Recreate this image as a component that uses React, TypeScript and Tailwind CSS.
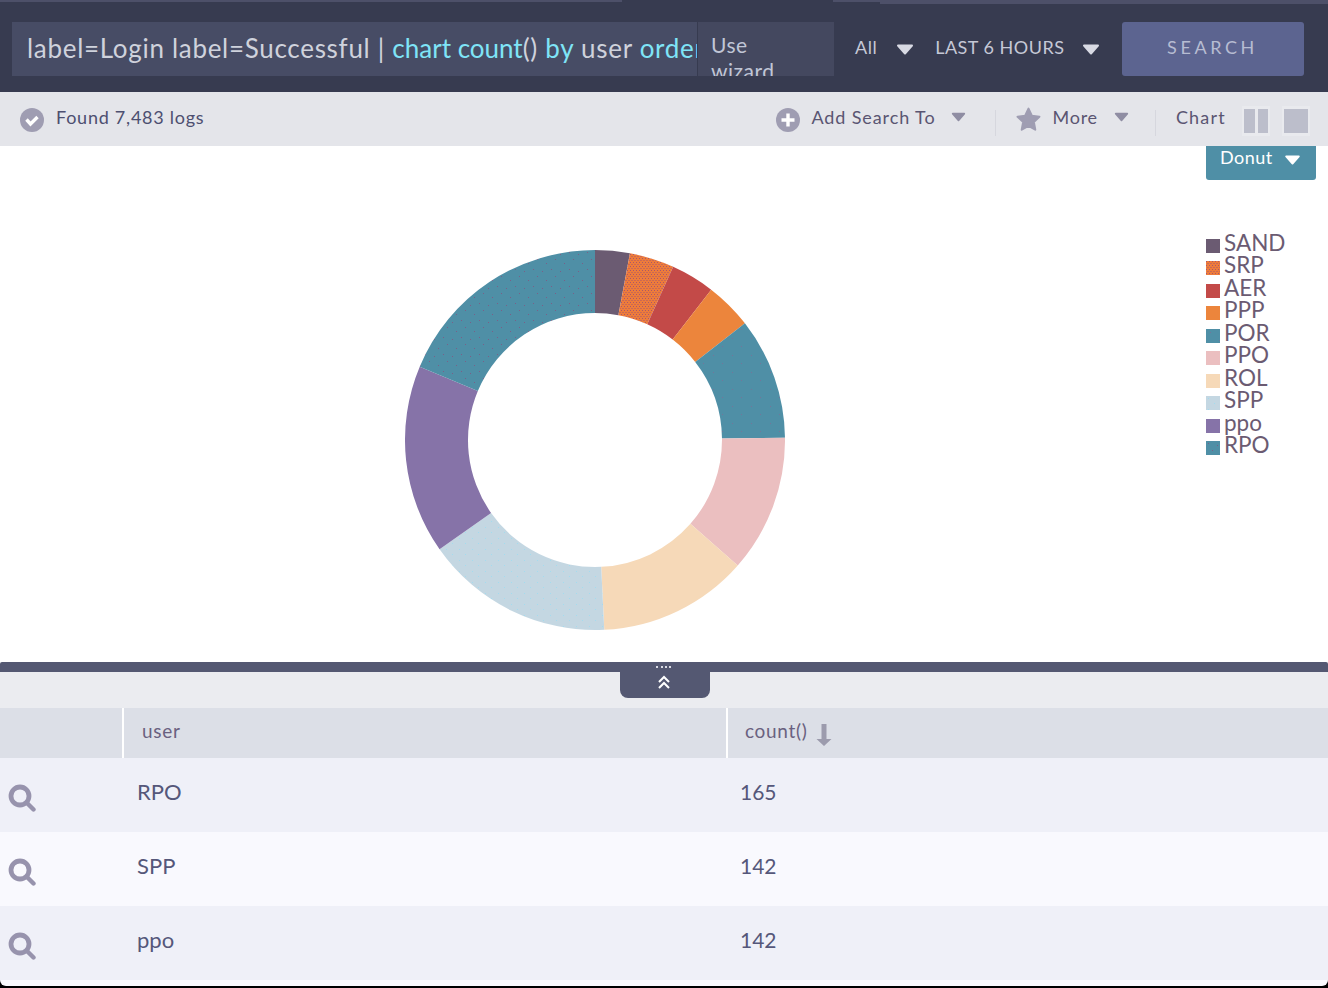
import React from "react";

const CX = 190, CY = 190, RO = 190, RI = 127;
function arc(a0: number, a1: number) {
  const p = (r: number, a: number) => {
    const t = (a * Math.PI) / 180;
    return `${(CX + r * Math.sin(t)).toFixed(2)} ${(CY - r * Math.cos(t)).toFixed(2)}`;
  };
  const large = a1 - a0 > 180 ? 1 : 0;
  return `M${p(RO, a0)} A${RO} ${RO} 0 ${large} 1 ${p(RO, a1)} L${p(RI, a1)} A${RI} ${RI} 0 ${large} 0 ${p(RI, a0)} Z`;
}

const slices = [
  { name: "SAND", color: "#6b5b72", a: 0, b: 10.6 },
  { name: "SRP", color: "url(#dotSrp)", a: 10.6, b: 24.3 },
  { name: "AER", color: "#c34a48", a: 24.3, b: 37.7 },
  { name: "PPP", color: "#ec853c", a: 37.7, b: 52.1 },
  { name: "POR", color: "url(#dotPor)", a: 52.1, b: 89.3 },
  { name: "PPO", color: "#ebbfc0", a: 89.3, b: 131.3 },
  { name: "ROL", color: "#f6d9b8", a: 131.3, b: 177.2 },
  { name: "SPP", color: "url(#dotSpp)", a: 177.2, b: 234.9 },
  { name: "ppo", color: "#8673a8", a: 234.9, b: 292.7 },
  { name: "RPO", color: "url(#dotRpo)", a: 292.7, b: 360 },
];

function Caret({ color, className }: { color: string; className: string }) {
  return (
    <svg viewBox="0 0 18 11" className={className}>
      <path d="M2 1.5h14L9 9.5z" fill={color} stroke={color} strokeWidth="2" strokeLinejoin="round" />
    </svg>
  );
}

function SearchIcon() {
  return (
    <svg viewBox="0 0 28 28" className="w-7 h-7 shrink-0">
      <circle cx="12" cy="12" r="9" fill="none" stroke="#9793ad" strokeWidth="4.8" />
      <path d="M19 19l6.5 6.5" stroke="#9793ad" strokeWidth="4.4" strokeLinecap="round" />
    </svg>
  );
}

function Row({ user, count, bg }: { user: string; count: string; bg: string }) {
  return (
    <div className={`grid grid-cols-[137px_603px_1fr] h-[74px] ${bg}`}>
      <div className="pl-2 pt-[26px]"><SearchIcon /></div>
      <div className="pt-[19px] text-[22px] leading-[30px] text-[#55577a]">{user}</div>
      <div className="pt-[19px] text-[21px] leading-[30px] text-[#55577a]">{count}</div>
    </div>
  );
}

export default function App() {
  return (
    <div className="w-[1328px] h-[988px] overflow-hidden flex flex-col bg-white font-['Lato','Noto_Sans',sans-serif]">
      {/* Top bar */}
      <div className="relative h-[92px] shrink-0 bg-[#373b50] flex items-start pt-[22px] pl-3">
        <div className="absolute top-0 left-0 h-[2px] w-[622px] bg-[#4d5069]" />
        <div className="absolute top-0 left-[833px] h-[2px] w-[47px] bg-[#4d5069]" />
        <div className="absolute top-0 left-[880px] right-0 h-1 bg-[#4d5069]" />
        <div className="w-[685px] h-[54px] bg-[#474c65] overflow-hidden whitespace-nowrap pl-[15px] text-[26px] tracking-[0.7px] leading-[52px] text-[#cfd2dc]">
          label=Login label=Successful | <span className="text-[#7fe4f7] tracking-normal">chart count</span>() <span className="text-[#7fe4f7]">by</span> user <span className="text-[#7fe4f7]">order by count() desc</span>
        </div>
        <div className="ml-px w-[136px] h-[54px] bg-[#44485f] overflow-hidden pl-[13px] pt-[10px] text-[21px] tracking-[0.5px] leading-[26px] text-[#c0c6d6]">
          <div className="w-[70px]">Use wizard</div>
        </div>
        <div className="ml-[21px] h-[54px] pb-[4px] flex items-center text-[#c5c8d6] text-[18px] tracking-[0.5px]">
          <span>All</span>
          <Caret color="#d8dae4" className="w-[18px] h-[11px] ml-[19px] mt-[5px]" />
          <span className="ml-[21px]">LAST 6 HOURS</span>
          <Caret color="#d8dae4" className="w-[18px] h-[11px] ml-[17px] mt-[5px]" />
        </div>
        <div className="ml-[22px] w-[182px] h-[54px] pb-[3px] rounded-[3px] bg-[#5c6490] flex items-center justify-center text-[18px] tracking-[3.6px] text-[#b7bcd2]">
          SEARCH
        </div>
      </div>

      {/* Toolbar */}
      <div className="h-[54px] pb-[3px] shrink-0 bg-[#e4e5ea] flex items-center text-[18px] tracking-[0.75px] text-[#5a5572]">
        <svg viewBox="0 0 24 24" className="w-6 h-6 ml-5 mt-[5px] shrink-0">
          <circle cx="12" cy="12" r="12" fill="#9f9db2" />
          <path d="M6.5 11.5l4 4.5 7-7" fill="none" stroke="#fff" strokeWidth="3.4" />
        </svg>
        <span className="ml-3 text-[#4d4f70]">Found 7,483 logs</span>
        <svg viewBox="0 0 24 24" className="w-6 h-6 ml-[572px] mt-[5px] shrink-0">
          <circle cx="12" cy="12" r="12" fill="#9f9db2" />
          <path d="M12 5.5v13M5.5 12h13" stroke="#fff" strokeWidth="3.4" />
        </svg>
        <span className="ml-[11px] tracking-[0.9px]">Add Search To</span>
        <Caret color="#8f8da3" className="w-[15px] h-[10px] ml-[15px] -mt-[1px]" />
        <div className="ml-[29px] w-px h-[26px] mt-[11px] bg-[#d6d7de]" />
        <svg viewBox="0 0 26 26" className="w-[27px] h-[27px] ml-[19px] mt-[3px] shrink-0">
          <path d="M13 2.5l3.2 6.9 7.3.9-5.4 5.1 1.4 7.4L13 19.2l-6.5 3.6 1.4-7.4-5.4-5.1 7.3-.9z" fill="#9f9db2" stroke="#9f9db2" strokeWidth="2" strokeLinejoin="round" />
        </svg>
        <span className="ml-[11px]">More</span>
        <Caret color="#8f8da3" className="w-[15px] h-[10px] ml-[16px] -mt-[1px]" />
        <div className="ml-[26px] w-px h-[26px] mt-[11px] bg-[#d6d7de]" />
        <span className="ml-[20px] tracking-[1.2px]">Chart</span>
        <div className="ml-[16px] mt-[7px] w-[28px] h-[30px] bg-[#e9eaee] flex items-center justify-center gap-[3px]">
          <div className="w-[11px] h-[24px] bg-[#bcbecb]" />
          <div className="w-[10px] h-[24px] bg-[#bcbecb]" />
        </div>
        <div className="ml-[12px] mt-[7px] w-[28px] h-[30px] bg-[#e9eaee] flex items-center justify-center">
          <div className="w-[24px] h-[24px] bg-[#bcbecb]" />
        </div>
      </div>

      {/* Chart */}
      <div className="h-[516px] shrink-0 flex items-start bg-white">
        <svg viewBox="0 0 380 380" className="w-[380px] h-[380px] ml-[405px] mt-[104px] shrink-0">
          <defs>
            <pattern id="dotSrp" width="3" height="4" patternUnits="userSpaceOnUse">
              <rect width="3" height="4" fill="#ee7c3a" />
              <rect x="0" y="0" width="1" height="1" fill="#a9566c" />
              <rect x="1.5" y="2" width="1" height="1" fill="#a9566c" />
            </pattern>
            <pattern id="dotPor" width="19" height="17" patternUnits="userSpaceOnUse">
              <rect width="19" height="17" fill="#4f8fa6" />
              <rect x="4" y="3" width="1" height="1" fill="#74759a" />
              <rect x="13" y="11" width="1" height="1" fill="#74759a" />
            </pattern>
            <pattern id="dotSpp" width="13" height="11" patternUnits="userSpaceOnUse">
              <rect width="13" height="11" fill="#c4d7e2" />
              <rect x="2" y="2" width="1" height="1" fill="#a3dcef" />
              <rect x="8" y="7" width="1" height="1" fill="#a3dcef" />
            </pattern>
            <pattern id="dotRpo" width="18" height="17" patternUnits="userSpaceOnUse">
              <rect width="18" height="17" fill="#4f8fa6" />
              <rect x="2" y="2" width="1" height="1" fill="#7b5f88" />
              <rect x="11" y="4" width="1" height="1" fill="#7b5f88" />
              <rect x="6" y="9" width="1" height="1" fill="#7b5f88" />
              <rect x="15" y="13" width="1" height="1" fill="#7b5f88" />
            </pattern>
          </defs>
          {slices.map((s) => (
            <path key={s.name} d={arc(s.a, s.b)} fill={s.color} />
          ))}
        </svg>
        <div className="ml-[421px] w-[110px] shrink-0">
          <div className="h-[34px] rounded-b-[3px] bg-[#4f8fa6] flex items-start pl-[14px] text-[18px] tracking-[0.5px] leading-[22px] text-white">
            Donut
            <Caret color="#ffffff" className="w-[17px] h-[10px] ml-[11px] mt-[9px]" />
          </div>
          <div className="mt-[51.5px] flex flex-col">
            {slices.map((s) => (
              <div key={s.name} className="h-[22.5px] flex items-center text-[22.5px] leading-[22px] text-[#6b5b72]">
                <svg viewBox="0 0 14 14" className="w-[14px] h-[14px] mt-[6px] shrink-0">
                  <rect width="14" height="14" fill={s.color} />
                </svg>
                <span className="ml-1">{s.name}</span>
              </div>
            ))}
          </div>
        </div>
      </div>

      {/* Divider */}
      <div className="relative h-[10px] shrink-0 rounded-t-[2px] bg-[#545872]">
        <div className="absolute left-[620px] top-[10px] w-[90px] h-[26px] rounded-b-[8px] bg-[#545872] flex items-start justify-center">
          <svg viewBox="0 0 14 14" className="w-[14px] h-[14px] mt-[3px] -ml-[3px]">
            <path d="M2 7l5-5 5 5M2 13l5-5 5 5" fill="none" stroke="#fff" strokeWidth="2" />
          </svg>
        </div>
        <div className="absolute left-[656px] top-[4px] w-[15px] h-[2px] border-t-2 border-dotted border-[#d9dbe4]" />
      </div>
      <div className="h-[36px] shrink-0 bg-[#ebecf0]" />

      {/* Table */}
      <div className="grid grid-cols-[124px_604px_1fr] h-[50px] pb-0 shrink-0 bg-[#dcdfe7] text-[19px] tracking-[0.7px] text-[#6a6180]">
        <div className="border-r-2 border-white" />
        <div className="border-r-2 border-white pl-[18px] pb-[3px] flex items-center">user</div>
        <div className="pl-[17px] pb-[3px] flex items-center">
          count()
          <svg viewBox="0 0 18 24" className="w-[18px] h-[24px] ml-[7px] mt-[6px]">
            <path d="M6.5 1h5v15h5l-7.5 7-7.5-7h5z" fill="#9c9bad" />
          </svg>
        </div>
      </div>
      <Row user="RPO" count="165" bg="bg-[#eff0f8]" />
      <Row user="SPP" count="142" bg="bg-[#f9f9fe]" />
      <Row user="ppo" count="142" bg="bg-[#eff0f8]" />
      <div className="h-[8px] shrink-0 bg-black">
        <div className="h-[6px] rounded-bl-[6px] rounded-br-[6px] bg-[#fafafe]" />
      </div>
    </div>
  );
}
